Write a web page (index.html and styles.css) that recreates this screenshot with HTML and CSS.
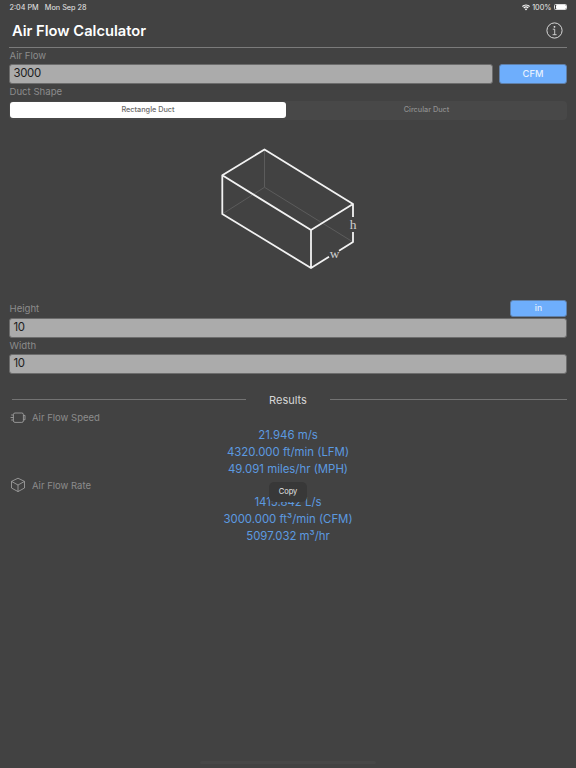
FILE: index.html
```html
<!DOCTYPE html>
<html lang="en">
<head>
<meta charset="utf-8">
<title>Air Flow Calculator</title>
<link rel="stylesheet" href="styles.css">
</head>
<body>
<div class="page">
  <div class="status">
    <span class="status-time">2:04 PM&nbsp;&nbsp; Mon Sep 28</span>
    <span class="status-right">
      <svg class="wifi" width="10" height="8" viewBox="0 0 10 8"><path d="M5 7.6 3.5 5.9a2.2 2.2 0 0 1 3 0zM2.7 5.1 1.7 4a4.9 4.9 0 0 1 6.6 0l-1 1.1a3.5 3.5 0 0 0-4.6 0zM1 3.3 0 2.2a7.4 7.4 0 0 1 10 0L9 3.3a6 6 0 0 0-8 0z" fill="#fff"/></svg>
      <span>100%</span>
      <span class="battery"><span class="battery-fill"></span></span>
    </span>
  </div>
  <header class="title-bar">
    <h1 class="title">Air Flow Calculator</h1>
    <svg class="info" width="17" height="17" viewBox="0 0 17 17"><circle cx="8.5" cy="8.5" r="7.6" fill="none" stroke="#e8e8e8" stroke-width=".9"/><circle cx="8.5" cy="4.8" r=".9" fill="#e8e8e8"/><path d="M6.8 7.2h1.9v5.4M6.6 12.7h4" fill="none" stroke="#e8e8e8" stroke-width=".8"/></svg>
  </header>
  <label class="label label-first">Air Flow</label>
  <div class="row">
    <div class="field field-grow">3000</div>
    <div class="unit unit-cfm">CFM</div>
  </div>
  <label class="label label-shape">Duct Shape</label>
  <div class="segments">
    <div class="segment segment-on">Rectangle Duct</div>
    <div class="segment">Circular Duct</div>
  </div>
  <div class="diagram">
    <svg width="576" height="180" viewBox="0 120 576 180">
      <g fill="none" stroke="#5c5c5c" stroke-width="1">
        <path d="M264.5 149.5V187.3M222.3 214 264.5 187.3 353 242"/>
      </g>
      <g fill="none" stroke="#f2f2f2" stroke-width="1.8" stroke-linejoin="round">
        <path d="M222.3 175.3 264.5 149.5 353 204 311 230ZM222.3 175.3V214L311 268V230M353 204V217M353 232V242L339 250.7M329 256.7 311 268"/>
      </g>
      <text class="dim" x="353" y="229" text-anchor="middle">h</text>
      <text class="dim" x="334.5" y="258" text-anchor="middle">w</text>
    </svg>
  </div>
  <div class="height-head">
    <label class="label">Height</label>
    <div class="unit unit-in">in</div>
  </div>
  <div class="field">10</div>
  <label class="label label-width">Width</label>
  <div class="field field-width">10</div>
  <div class="results-head">
    <span class="rule rule-left"></span>
    <span class="results-title">Results</span>
    <span class="rule"></span>
  </div>
  <div class="result-label">
    <svg width="16" height="11" viewBox="0 0 16 11"><g fill="none" stroke="#a8a8a8" stroke-width=".8"><rect x="3.4" y="1" width="10" height="9.4" rx="1.6"/><path d="M3.4 3H1.2M3.4 5.5H.6M3.4 8H1.2M13.4 3.4h1.6v4.4h-1.6"/></g></svg>
    <span>Air Flow Speed</span>
  </div>
  <div class="values values-speed">
    <div>21.946 m/s</div>
    <div>4320.000 ft/min (LFM)</div>
    <div>49.091 miles/hr (MPH)</div>
  </div>
  <div class="result-label result-label-rate">
    <svg width="16" height="16" viewBox="0 0 16 16"><g fill="none" stroke="#a8a8a8" stroke-width=".8" stroke-linejoin="round"><path d="M8 1.2 14.5 4.4V11L8 14.6 1.5 11V4.4ZM1.5 4.4 8 8 14.5 4.4M8 8V14.6"/></g></svg>
    <span>Air Flow Rate</span>
  </div>
  <div class="values values-rate">
    <div>1415.842 L/s</div>
    <div>3000.000 ft³/min (CFM)</div>
    <div>5097.032 m³/hr</div>
  </div>
  <div class="copy">Copy</div>
  <div class="home"></div>
</div>
</body>
</html>
```
FILE: styles.css
```css
* { box-sizing: border-box; }
html, body { margin: 0; height: 100%; }
body {
  background: #424242;
  font-family: Inter, "Liberation Sans", sans-serif;
  overflow: hidden;
}
.page {
  position: relative;
  width: 576px;
  height: 768px;
  padding: 0 9px;
  background: #424242;
  display: flex;
  flex-direction: column;
  align-items: stretch;
}
.status {
  height: 14px;
  padding: 0 0 0 0.5px;
  display: flex;
  justify-content: space-between;
  align-items: center;
  color: #e8e8e8;
  font-size: 7.3px;
}
.status-right { display: flex; align-items: center; gap: 2.5px; }
.wifi { display: block; width: 8px; height: 7px; }
.battery {
  width: 13px;
  height: 6.5px;
  border: 0.5px solid #ddd;
  border-radius: 1.5px;
  padding: 0.5px;
  display: block;
}
.battery-fill { display: block; height: 100%; background: #fff; border-radius: 1px; }
.title-bar {
  height: 34px;
  display: flex;
  align-items: center;
  justify-content: space-between;
  padding: 0 4px 0 3px;
  border-bottom: 1px solid #7b7b7b;
}
.title { margin: 0; font-size: 14.7px; font-weight: 600; color: #fff; }
.info { display: block; margin-top: -1px; }
.label { display: block; padding-left: 0.5px; color: #8c8c8c; font-size: 9.6px; line-height: 12px; }
.label-first { margin-top: 2px; }
.label-shape { margin-top: 2.5px; }
.label-width { margin-top: 2.5px; }
.row { display: flex; gap: 6px; margin-top: 2px; }
.field {
  height: 19.5px;
  background: #ababab;
  border: 1px solid #6c6c6c;
  border-radius: 3px;
  color: #1d1d1d;
  font-size: 11.4px;
  letter-spacing: -0.3px;
  line-height: 17.5px;
  padding-left: 3.5px;
}
.field-grow { flex: 1; }
.field-width { margin-top: 2px; }
.unit {
  background: #6eaefc;
  border: 1px solid #5f7fa8;
  border-radius: 3px;
  color: #e6f1ff;
  font-size: 9.3px;
  font-weight: 500;
  text-align: center;
}
.unit-cfm { width: 68px; height: 19.5px; line-height: 17.5px; }
.unit-in { width: 57px; height: 17px; line-height: 15px; font-size: 8.5px; }
.segments {
  margin-top: 2.5px;
  height: 19px;
  background: #484848;
  border-radius: 4px;
  display: flex;
}
.segment {
  flex: 1;
  text-align: center;
  font-size: 7.3px;
  font-weight: 500;
  line-height: 16px;
  color: #8e8e8e;
  height: 16px;
  margin: 1px;
  border-radius: 3px;
}
.segment-on { background: #fff; color: #6a6a6a; flex: 0 0 276px; margin-right: 0; }
.diagram { height: 180px; margin: 0.5px -9px 0; }
.diagram svg { display: block; }
.dim { font-family: "Liberation Serif", serif; font-size: 13.5px; fill: #cfcfcf; }
.height-head { display: flex; justify-content: space-between; align-items: center; height: 17px; margin-bottom: 1px; }
.results-head { display: flex; align-items: center; margin-top: 16px; padding-left: 2.5px; height: 20px; }
.rule { flex: 1; height: 1px; background: #737373; }
.rule-left { flex: 0 0 234.5px; }
.results-title { width: 84px; text-align: center; color: #d6d6d6; font-size: 11px; }
.result-label {
  display: flex;
  align-items: center;
  gap: 6.5px;
  height: 14px;
  padding-left: 0.5px;
  color: #8c8c8c;
  font-size: 9.5px;
  margin-top: 1px;
}
.result-label svg { flex: none; display: block; }
.values { text-align: center; color: #5c9ae0; font-size: 11.4px; line-height: 17px; margin-left: -9px; margin-right: -9px; }
.values-speed { margin-top: 2px; }
.result-label-rate { margin-top: -0.5px; height: 16px; }
.values-rate { margin-top: 0.5px; }
.copy {
  position: absolute;
  left: 269px;
  top: 482px;
  width: 38px;
  height: 20px;
  background: #383838;
  border-radius: 5px;
  color: #e4e4e4;
  font-size: 7.5px;
  line-height: 20px;
  text-align: center;
}
.home {
  position: absolute;
  left: 200px;
  top: 761px;
  width: 176px;
  height: 3px;
  background: #474747;
  border-radius: 2px;
}
```
